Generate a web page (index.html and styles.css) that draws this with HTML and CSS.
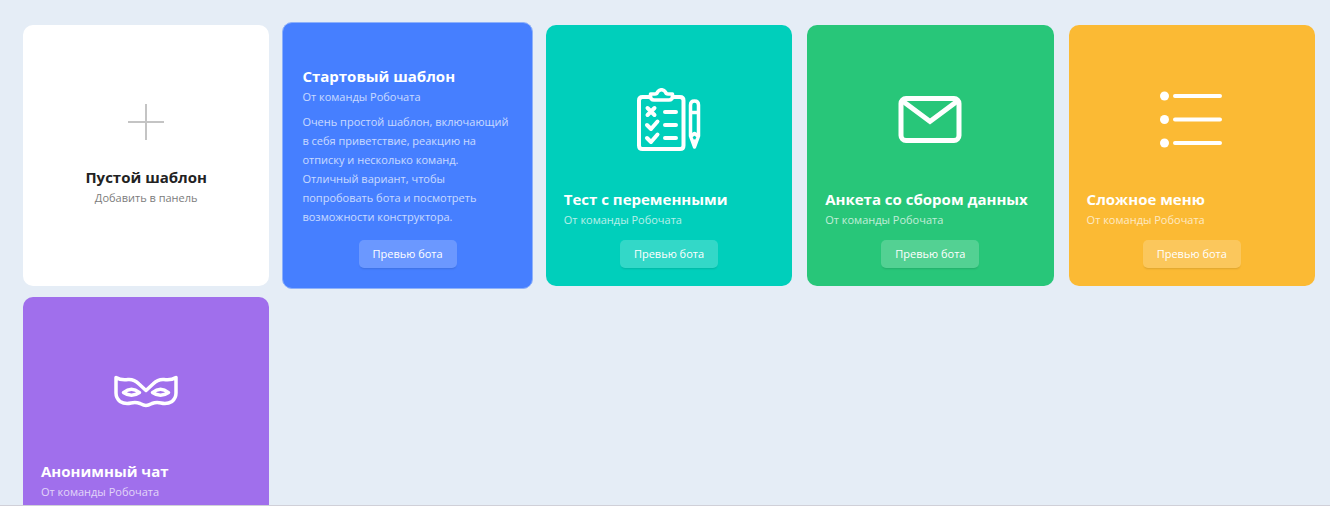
FILE: index.html
```html
<!DOCTYPE html>
<html lang="ru">
<head>
<meta charset="utf-8">
<title>Шаблоны</title>
<link rel="stylesheet" href="styles.css">
</head>
<body>
<main class="panel">
  <div class="templates">
    <article class="card card--empty">
      <svg class="plus" viewBox="0 0 36 36" fill="none" stroke="#c4c4c4" stroke-width="2" aria-hidden="true"><path d="M18 0V36M0 18H36"/></svg>
      <h2 class="card__title">Пустой шаблон</h2>
      <p class="card__author">Добавить в панель</p>
    </article>

    <article class="card card--blue card--active">
      <h2 class="card__title">Стартовый шаблон</h2>
      <p class="card__author">От команды Робочата</p>
      <p class="card__text">Очень простой шаблон, включающий в себя приветствие, реакцию на отписку и несколько команд. Отличный вариант, чтобы попробовать бота и посмотреть возможности конструктора.</p>
      <button class="preview" type="button">Превью бота</button>
    </article>

    <article class="card card--teal">
      <svg class="card__icon" viewBox="0 0 64 64" fill="none" stroke="#fff" stroke-width="4" stroke-linecap="round" stroke-linejoin="round" aria-hidden="true">
        <path d="M13 9H5.500Q2 9 2 12.500V57.500Q2 61 5.500 61H43Q46.500 61 46.500 57.500V12.500Q46.500 9 43 9H36"/>
        <path stroke-width="3.500" d="M13.500 6H18Q20 6 20.500 4Q22 1.700 24.500 1.700T28.500 4Q29 6 31 6H35.500V8Q35.500 12 32 12H17Q13.500 12 13.500 8Z"/>
        <path d="M10.500 20L17.500 27M17.500 20L10.500 27M28 24H39M28 37H39M28 50H39"/>
        <path d="M10 37L14 41L20.500 33.500M10 50L14 54L20.500 46.500"/>
        <path stroke-width="3.500" d="M53.500 17Q53.500 13 57.500 13T61.500 17V48L57.500 59L53.500 48ZM53.500 24.500H61.500M54 48L57.500 45.500L61 48M57.500 53V58"/>
      </svg>
      <h2 class="card__title">Тест с переменными</h2>
      <p class="card__author">От команды Робочата</p>
      <button class="preview" type="button">Превью бота</button>
    </article>

    <article class="card card--green">
      <svg class="card__icon" viewBox="0 0 64 64" fill="none" stroke="#fff" stroke-width="5" aria-hidden="true">
        <rect x="3" y="10.500" width="58" height="42" rx="5"/>
        <path d="M4.500 13L32 33.500L59.500 13"/>
      </svg>
      <h2 class="card__title">Анкета со сбором данных</h2>
      <p class="card__author">От команды Робочата</p>
      <button class="preview" type="button">Превью бота</button>
    </article>

    <article class="card card--yellow">
      <svg class="card__icon" viewBox="0 0 64 64" fill="#fff" stroke="#fff" stroke-width="4" stroke-linecap="round" aria-hidden="true">
        <g stroke="none"><circle cx="4.500" cy="8" r="4.500"/><circle cx="4.500" cy="31.500" r="4.500"/><circle cx="4.500" cy="55" r="4.500"/></g>
        <path d="M15 8H60M15 31.500H60M15 55H60"/>
      </svg>
      <h2 class="card__title">Сложное меню</h2>
      <p class="card__author">От команды Робочата</p>
      <button class="preview" type="button">Превью бота</button>
    </article>

    <article class="card card--purple">
      <svg class="card__icon" viewBox="0 0 64 64" fill="none" stroke="#fff" stroke-width="3.500" stroke-linejoin="round" aria-hidden="true">
        <path d="M2 17.500Q7 20.500 14 19.500Q20 19 25 24L32 30.500L39 24Q44 19 50 19.500Q57 20.500 62 17.500V33Q62 38 58 41.500Q53 44.500 47 43Q42 42 38 43.500Q34 45.500 32 45.500T26 43.500Q22 42 17 43Q11 44.500 6 41.500Q2 38 2 33Z"/>
        <path d="M9.500 32.500Q17.500 26 25.500 32.500Q17.500 38 9.500 32.500ZM38.500 32.500Q46.500 26 54.500 32.500Q46.500 38 38.500 32.500Z"/>
      </svg>
      <h2 class="card__title">Анонимный чат</h2>
      <p class="card__author">От команды Робочата</p>
    </article>
  </div>
</main>
</body>
</html>
```
FILE: styles.css
```css
* {
  box-sizing: border-box;
}

body {
  margin: 0;
  background: #fff;
  font-family: "Open Sans", "Noto Sans", sans-serif;
  font-size: 11px;
}

.panel {
  height: calc(100vh - 2px);
  overflow: hidden;
  border-bottom: 1px solid #d0d0d8;
  background: #e5edf6;
}

.templates {
  display: grid;
  grid-template-columns: repeat(5, minmax(0, 1fr));
  grid-auto-rows: 261px;
  gap: 11px 15px;
  padding: 25px 15px 25px 23px;
}

.card {
  display: flex;
  flex-direction: column;
  justify-content: flex-end;
  padding: 18px;
  border-radius: 10px;
  color: #fff;
}

.card--empty {
  align-items: center;
  justify-content: center;
  background: #fff;
  color: #222;
}

.card--blue { background: #467fff; }
.card--teal { background: #00cfbb; }
.card--green { background: #28c679; }
.card--yellow { background: #fbba34; }

.card--purple {
  padding-bottom: 56px;
  background: #a06fec;
}

.card--active {
  margin: -3px -2px;
  padding: 20px 19px;
  border: 1px solid #8db1fb;
}

.plus {
  width: 36px;
  height: 36px;
  margin-bottom: 26px;
}

.card__icon {
  align-self: center;
  width: 64px;
  height: 64px;
  margin-bottom: 36px;
}

.card__title {
  margin: 0;
  font-size: 15px;
  line-height: 22px;
  font-weight: 700;
  white-space: nowrap;
}

.card__author {
  margin: 0;
  line-height: 20px;
  opacity: 0.7;
}

.card__text {
  margin: 5px 0 4px;
  line-height: 19px;
  opacity: 0.7;
}

.card--empty .card__author {
  color: #222;
  opacity: 0.6;
}

.preview {
  align-self: center;
  margin: 10px 0 0;
  padding: 0 14px;
  border: 0;
  border-radius: 5px;
  background: rgba(255, 255, 255, 0.2);
  box-shadow: 0 2px 2px -1px rgba(0, 0, 0, 0.12);
  color: #fff;
  font: inherit;
  line-height: 28px;
}
```
